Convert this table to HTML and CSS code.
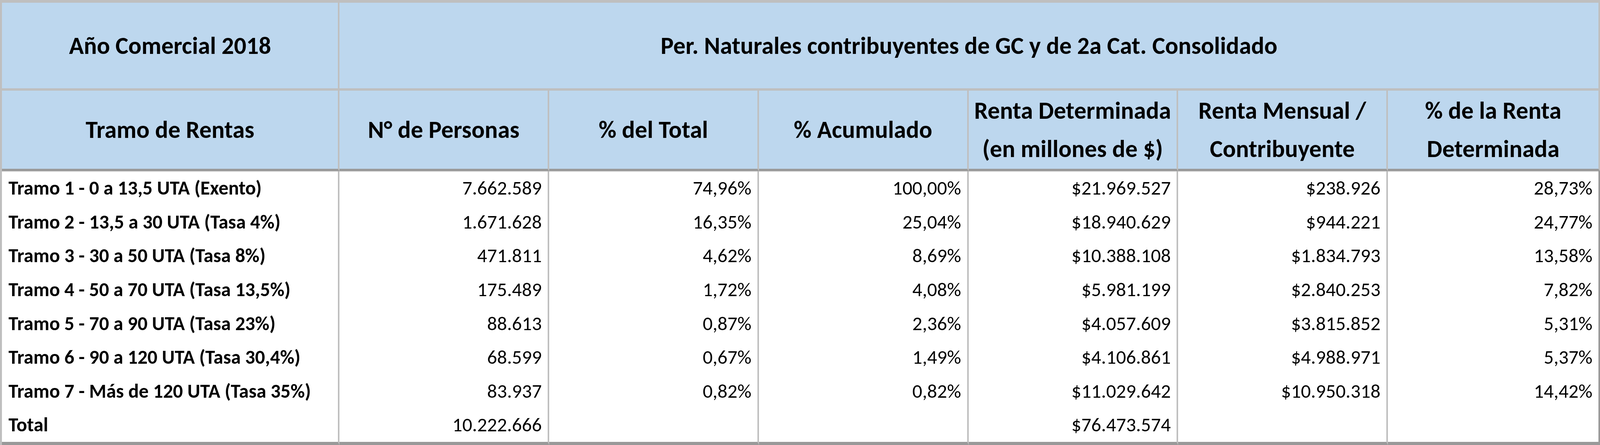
FILE: index.html
```html
<!DOCTYPE html>
<html lang="es">
<head>
<meta charset="utf-8">
<title>Año Comercial 2018</title>
<link rel="stylesheet" href="styles.css">
</head>
<body>
<table class="sheet">
  <colgroup>
    <col class="c-label">
    <col class="c-num">
    <col class="c-num">
    <col class="c-num">
    <col class="c-num">
    <col class="c-num">
    <col class="c-last">
  </colgroup>
  <thead>
    <tr class="h1">
      <th>Año Comercial 2018</th>
      <th colspan="6" class="edge">Per. Naturales contribuyentes de GC y de 2a Cat. Consolidado</th>
    </tr>
    <tr class="h2">
      <th>Tramo de Rentas</th>
      <th>N° de Personas</th>
      <th>% del Total</th>
      <th>% Acumulado</th>
      <th>Renta Determinada<br>(en millones de $)</th>
      <th>Renta Mensual /<br>Contribuyente</th>
      <th class="edge">% de la Renta<br>Determinada</th>
    </tr>
  </thead>
  <tbody>
    <tr class="first">
      <td class="label">Tramo 1 - 0 a 13,5 UTA (Exento)</td>
      <td>7.662.589</td><td>74,96%</td><td>100,00%</td><td>$21.969.527</td><td>$238.926</td><td class="edge">28,73%</td>
    </tr>
    <tr>
      <td class="label">Tramo 2 - 13,5 a 30 UTA (Tasa 4%)</td>
      <td>1.671.628</td><td>16,35%</td><td>25,04%</td><td>$18.940.629</td><td>$944.221</td><td class="edge">24,77%</td>
    </tr>
    <tr>
      <td class="label">Tramo 3 - 30 a 50 UTA (Tasa 8%)</td>
      <td>471.811</td><td>4,62%</td><td>8,69%</td><td>$10.388.108</td><td>$1.834.793</td><td class="edge">13,58%</td>
    </tr>
    <tr>
      <td class="label">Tramo 4 - 50 a 70 UTA (Tasa 13,5%)</td>
      <td>175.489</td><td>1,72%</td><td>4,08%</td><td>$5.981.199</td><td>$2.840.253</td><td class="edge">7,82%</td>
    </tr>
    <tr>
      <td class="label">Tramo 5 - 70 a 90 UTA (Tasa 23%)</td>
      <td>88.613</td><td>0,87%</td><td>2,36%</td><td>$4.057.609</td><td>$3.815.852</td><td class="edge">5,31%</td>
    </tr>
    <tr>
      <td class="label">Tramo 6 - 90 a 120 UTA (Tasa 30,4%)</td>
      <td>68.599</td><td>0,67%</td><td>1,49%</td><td>$4.106.861</td><td>$4.988.971</td><td class="edge">5,37%</td>
    </tr>
    <tr>
      <td class="label">Tramo 7 - Más de 120 UTA (Tasa 35%)</td>
      <td>83.937</td><td>0,82%</td><td>0,82%</td><td>$11.029.642</td><td>$10.950.318</td><td class="edge">14,42%</td>
    </tr>
    <tr class="last">
      <td class="label">Total</td>
      <td>10.222.666</td><td></td><td></td><td>$76.473.574</td><td></td><td class="edge"></td>
    </tr>
  </tbody>
</table>
</body>
</html>
```

FILE: styles.css
```css
html, body {
  margin: 0;
  padding: 0;
  background: #ffffff;
}

.sheet {
  width: 100%;
  box-sizing: border-box;
  table-layout: fixed;
  border-collapse: separate;
  border-spacing: 0;
  border-left: 0.13vw solid #bfbfbf;
  border-top: 7px solid #bfbfbf;
  font-family: "Carlito", "Calibri", "Lato", "Open Sans", "Liberation Sans", sans-serif;
  color: #000000;
}

.c-label { width: 21.13%; }
.c-num { width: 13.12%; }
.c-last { width: auto; }

.sheet th,
.sheet td {
  box-sizing: border-box;
  padding: 0;
  border-right: 0.1115vw solid #bfbfbf;
  white-space: nowrap;
  overflow: hidden;
}

.sheet th {
  background: #bdd7ee;
  font-weight: 700;
  font-size: 1.5236vw;
  line-height: 98px;
  text-align: center;
  vertical-align: middle;
}

.h1 th {
  height: 225px;
  border-bottom: 6px solid #bfbfbf;
}

.h2 th {
  height: 206px;
  border-bottom: 6px solid #999999;
}

.sheet td {
  height: 86.6px;
  font-size: 1.2263vw;
  line-height: 82px;
  text-align: right;
  vertical-align: middle;
  padding-right: 0.3716vw;
  font-weight: 400;
}

.sheet td.label {
  text-align: left;
  font-weight: 700;
  padding-left: 0.409vw;
  padding-right: 0;
}

.sheet td.edge {
  border-right-color: #999999;
}

.first td {
  box-shadow: inset 0 2px 0 #e2e2e2;
}

.last td {
  height: 94.6px;
  border-bottom: 8px solid #999999;
}
```
